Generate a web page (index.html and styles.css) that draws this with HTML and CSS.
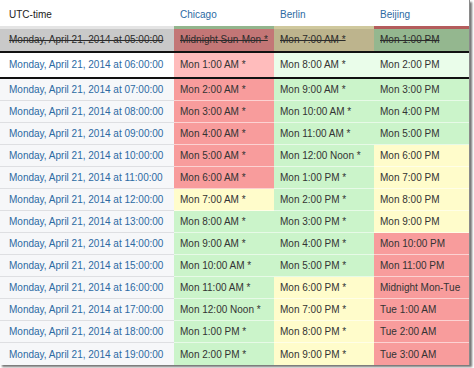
FILE: index.html
```html
<!DOCTYPE html>
<html>
<head>
<meta charset="utf-8">
<link rel="stylesheet" href="styles.css">
</head>
<body>
<div class="tz-table">
  <div class="row head">
    <div class="cell utc">UTC-time</div>
    <div class="cell city s-green">Chicago</div>
    <div class="cell city s-khaki">Berlin</div>
    <div class="cell city s-red">Beijing</div>
  </div>
  <div class="row past">
    <div class="cell utc">Monday, April 21, 2014 at 05:00:00</div>
    <div class="cell p-red">Midnight Sun-Mon *</div>
    <div class="cell p-khaki">Mon 7:00 AM *</div>
    <div class="cell p-green">Mon 1:00 PM</div>
  </div>
  <div class="row now">
    <div class="cell utc">Monday, April 21, 2014 at 06:00:00</div>
    <div class="cell lred">Mon 1:00 AM *</div>
    <div class="cell lgreen">Mon 8:00 AM *</div>
    <div class="cell lgreen">Mon 2:00 PM</div>
  </div>
  <div class="row">
    <div class="cell utc">Monday, April 21, 2014 at 07:00:00</div>
    <div class="cell red">Mon 2:00 AM *</div>
    <div class="cell green">Mon 9:00 AM *</div>
    <div class="cell green">Mon 3:00 PM</div>
  </div>
  <div class="row">
    <div class="cell utc">Monday, April 21, 2014 at 08:00:00</div>
    <div class="cell red">Mon 3:00 AM *</div>
    <div class="cell green">Mon 10:00 AM *</div>
    <div class="cell green">Mon 4:00 PM</div>
  </div>
  <div class="row">
    <div class="cell utc">Monday, April 21, 2014 at 09:00:00</div>
    <div class="cell red">Mon 4:00 AM *</div>
    <div class="cell green">Mon 11:00 AM *</div>
    <div class="cell green">Mon 5:00 PM</div>
  </div>
  <div class="row">
    <div class="cell utc">Monday, April 21, 2014 at 10:00:00</div>
    <div class="cell red">Mon 5:00 AM *</div>
    <div class="cell green">Mon 12:00 Noon *</div>
    <div class="cell yellow">Mon 6:00 PM</div>
  </div>
  <div class="row">
    <div class="cell utc">Monday, April 21, 2014 at 11:00:00</div>
    <div class="cell red">Mon 6:00 AM *</div>
    <div class="cell green">Mon 1:00 PM *</div>
    <div class="cell yellow">Mon 7:00 PM</div>
  </div>
  <div class="row">
    <div class="cell utc">Monday, April 21, 2014 at 12:00:00</div>
    <div class="cell yellow">Mon 7:00 AM *</div>
    <div class="cell green">Mon 2:00 PM *</div>
    <div class="cell yellow">Mon 8:00 PM</div>
  </div>
  <div class="row">
    <div class="cell utc">Monday, April 21, 2014 at 13:00:00</div>
    <div class="cell green">Mon 8:00 AM *</div>
    <div class="cell green">Mon 3:00 PM *</div>
    <div class="cell yellow">Mon 9:00 PM</div>
  </div>
  <div class="row">
    <div class="cell utc">Monday, April 21, 2014 at 14:00:00</div>
    <div class="cell green">Mon 9:00 AM *</div>
    <div class="cell green">Mon 4:00 PM *</div>
    <div class="cell red">Mon 10:00 PM</div>
  </div>
  <div class="row">
    <div class="cell utc">Monday, April 21, 2014 at 15:00:00</div>
    <div class="cell green">Mon 10:00 AM *</div>
    <div class="cell green">Mon 5:00 PM *</div>
    <div class="cell red">Mon 11:00 PM</div>
  </div>
  <div class="row">
    <div class="cell utc">Monday, April 21, 2014 at 16:00:00</div>
    <div class="cell green">Mon 11:00 AM *</div>
    <div class="cell yellow">Mon 6:00 PM *</div>
    <div class="cell red">Midnight Mon-Tue</div>
  </div>
  <div class="row">
    <div class="cell utc">Monday, April 21, 2014 at 17:00:00</div>
    <div class="cell green">Mon 12:00 Noon *</div>
    <div class="cell yellow">Mon 7:00 PM *</div>
    <div class="cell red">Tue 1:00 AM</div>
  </div>
  <div class="row">
    <div class="cell utc">Monday, April 21, 2014 at 18:00:00</div>
    <div class="cell green">Mon 1:00 PM *</div>
    <div class="cell yellow">Mon 8:00 PM *</div>
    <div class="cell red">Tue 2:00 AM</div>
  </div>
  <div class="row last">
    <div class="cell utc">Monday, April 21, 2014 at 19:00:00</div>
    <div class="cell green">Mon 2:00 PM *</div>
    <div class="cell yellow">Mon 9:00 PM *</div>
    <div class="cell red">Tue 3:00 AM</div>
  </div>
</div>
</body>
</html>
```

FILE: styles.css
```css
html, body {
  margin: 0;
  padding: 0;
  background: #ffffff;
}

body {
  font-family: "Liberation Sans", Arial, sans-serif;
  font-size: 10px;
  color: #333333;
  width: 474px;
  height: 368px;
  overflow: hidden;
}

.tz-table {
  width: 469px;
  background: #ffffff;
  border-right: 1px solid #8a8a8a;
  box-shadow: 2px 2px 2px rgba(0, 0, 0, 0.55);
}

.row {
  display: grid;
  grid-template-columns: 174px 100px 100px 95px;
  height: 22.05px;
}

.cell {
  box-sizing: border-box;
  display: flex;
  align-items: center;
  padding-left: 6px;
  white-space: nowrap;
  border-bottom: 1px solid rgba(255, 255, 255, 0.55);
}

.cell.utc {
  padding-left: 9px;
  color: #2c6aa3;
  background: #f6f7f9;
  border-bottom-color: #dedfe2;
}

/* header */
.row.head {
  height: 29px;
}
.row.head .cell {
  padding-top: 2px;
  border-bottom: 3px solid #e2e2e2;
  background: #ffffff;
}
.row.head .cell.utc {
  color: #222222;
  border-bottom-color: #e4e4e4;
}
.row.head .city {
  color: #2c6aa3;
}
.s-green { border-bottom-color: #93b58d !important; }
.s-khaki { border-bottom-color: #cfc89d !important; }
.s-red   { border-bottom-color: #b45c5c !important; }

/* past row */
.row.past {
  height: 23.5px;
}
.row.past .cell {
  text-decoration: line-through;
  color: #2b2b2b;
  border-bottom: 2px solid #111111;
}
.row.past .cell.utc {
  background: #c9c9c9;
  color: #2b2b2b;
}
.p-red   { background: #c37676; }
.p-khaki { background: #bdb48d; }
.p-green { background: #94b78f; }

/* current row */
.row.now {
  height: 26.2px;
}
.row.now .cell {
  border-bottom: 2px solid #111111;
}
.row.now .cell.utc {
  background: #ffffff;
}

.row.last .cell {
  border-bottom: none;
}

/* colours */
.red    { background: #f89c9c; }
.lred   { background: #ffbcbc; }
.green  { background: #cbf4ca; }
.lgreen { background: #eafdea; }
.yellow { background: #fffccb; }
```
